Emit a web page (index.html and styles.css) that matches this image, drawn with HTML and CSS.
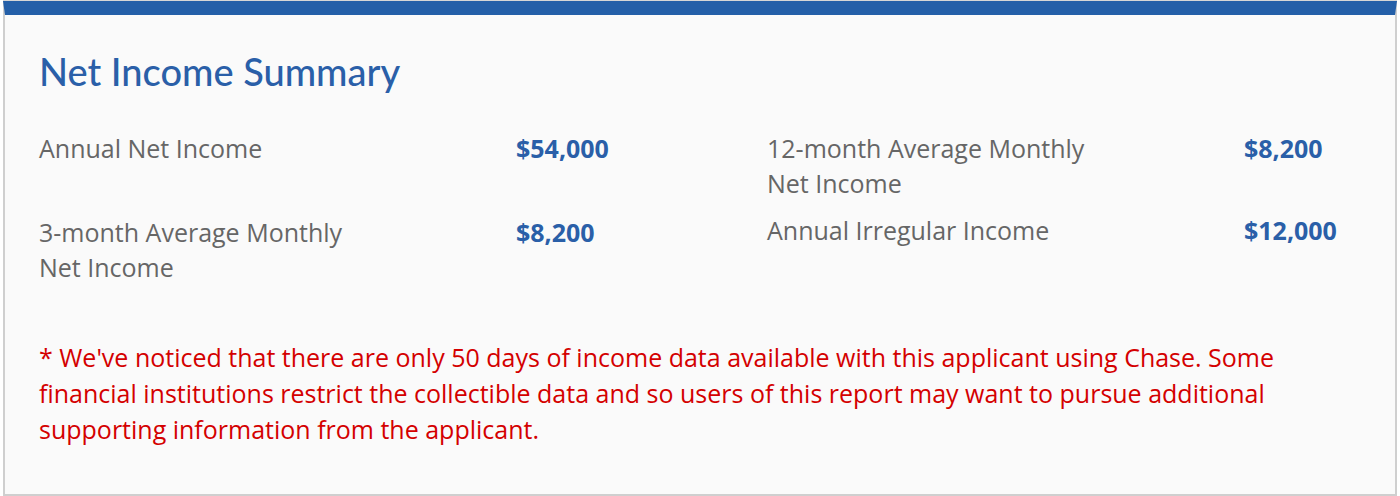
FILE: index.html
```html
<!DOCTYPE html>
<html>
<head>
<meta charset="utf-8">
<link rel="stylesheet" href="styles.css">
</head>
<body>
<div class="card">
  <h2 class="title">Net Income Summary</h2>
  <div class="grid">
    <div class="col col-left">
      <div class="item item-first">
        <div class="label">Annual Net Income</div>
        <div class="value">$54,000</div>
      </div>
      <div class="item">
        <div class="label">3-month Average Monthly Net Income</div>
        <div class="value">$8,200</div>
      </div>
    </div>
    <div class="col col-right">
      <div class="item">
        <div class="label">12-month Average Monthly Net Income</div>
        <div class="value">$8,200</div>
      </div>
      <div class="item">
        <div class="label">Annual Irregular Income</div>
        <div class="value">$12,000</div>
      </div>
    </div>
  </div>
  <p class="note">* We've noticed that there are only 50 days of income data available with this applicant using Chase. Some financial institutions restrict the collectible data and so users of this report may want to pursue additional supporting information from the applicant.</p>
</div>
</body>
</html>
```
FILE: styles.css
```css
html, body {
  margin: 0;
  padding: 0;
  background: #ffffff;
}
body {
  padding: 1px 3px 0 3px;
}
.card {
  box-sizing: border-box;
  height: 495px;
  background: #fafafa;
  border: 2px solid #cfcfcf;
  border-top: 14px solid #245fa8;
  box-shadow: 0 -1px 0 #d6d6d6;
  padding: 0 34px;
  font-family: "Open Sans", "Liberation Sans", sans-serif;
}
.title {
  margin: 33px 0 0 0;
  font-family: "Lato", "Open Sans", sans-serif;
  font-weight: 500;
  font-size: 38px;
  line-height: 46px;
  color: #2a5fa8;
}
.grid {
  display: flex;
  margin-top: 37px;
}
.col {
  display: flex;
  flex-direction: column;
}
.col-left {
  flex: 0 0 728px;
}
.col-right {
  flex: 1 1 auto;
}
.col-left .item-first {
  min-height: 84px;
}
.col-right .item + .item {
  margin-top: 12px;
}
.item {
  display: flex;
  align-items: flex-start;
}
.label {
  flex: 0 0 335px;
  margin-right: 142px;
  font-size: 25px;
  line-height: 35px;
  color: #666666;
}
.value {
  font-size: 25px;
  line-height: 35px;
  font-weight: 700;
  color: #2a5fa8;
}
.note {
  margin: 54px 0 0 0;
  font-size: 25px;
  line-height: 36px;
  color: #d40000;
}
```
